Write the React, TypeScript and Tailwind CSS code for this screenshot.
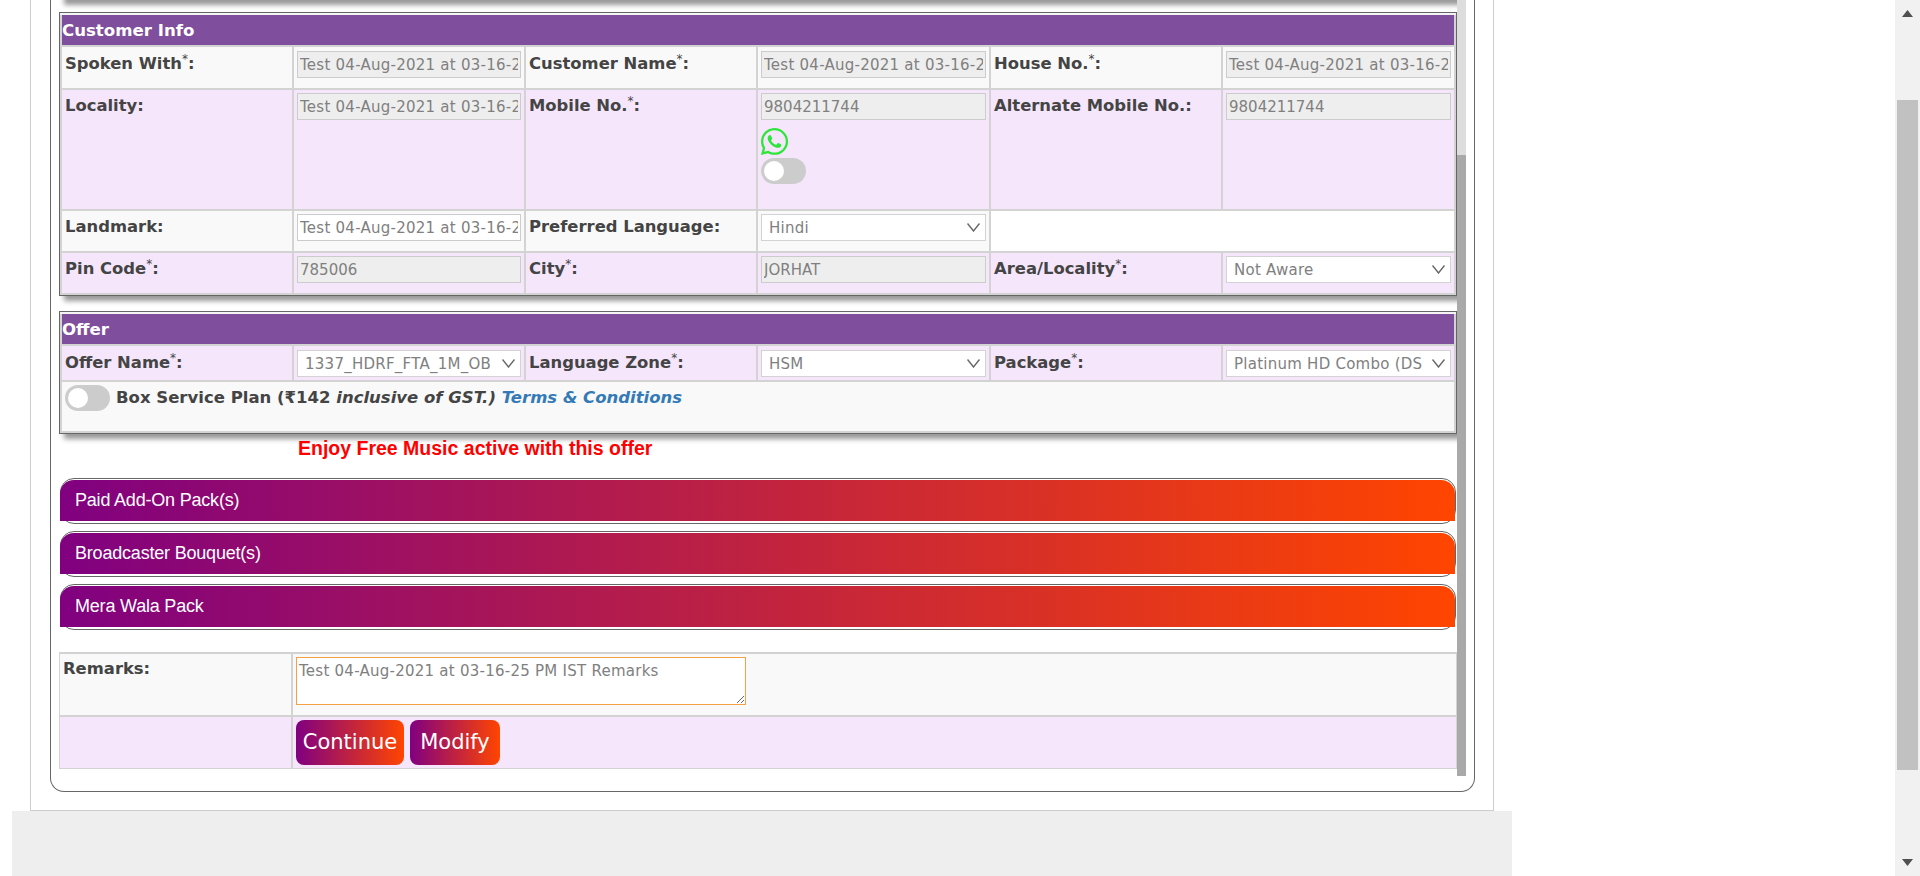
import { FaWhatsapp } from "react-icons/fa"

const testValue = "Test 04-Aug-2021 at 03-16-25 PM IST"

function Label({ text, required }: { text: string; required?: boolean }) {
  return (
    <label className="block text-[16.4px] leading-[20px] font-bold text-[#444444]">
      {text}
      {required && <sup className="text-[12px] font-normal">*</sup>}
      {required && ":"}
    </label>
  )
}

function LabelCell({ text, required, bg, pad = "pt-[6px]" }: { text: string; required?: boolean; bg: string; pad?: string }) {
  return (
    <div className={`${bg} ${pad} pl-[3px]`}>
      <Label text={text} required={required} />
    </div>
  )
}

function TextField({ value, disabled = true }: { value: string; disabled?: boolean }) {
  return (
    <input
      readOnly
      value={value}
      className={`block w-full h-[27px] border border-[#cccccc] px-[2px] text-[15px] text-[#808080] outline-none ${
        disabled ? "bg-[#eeeeee]" : "bg-white"
      } ${value === testValue ? "tracking-[0.25px]" : ""}`}
    />
  )
}

function SelectField({ value }: { value: string }) {
  return (
    <div className="relative">
      <select
        value={value}
        onChange={() => {}}
        className="block w-full h-[27px] appearance-none border border-[#d3d3d3] bg-white pl-[7px] pr-[28px] pt-px text-[15px] tracking-[0.25px] text-[#808080] outline-none"
      >
        <option>{value}</option>
      </select>
      <svg width="13" height="9" viewBox="0 0 13 9" className="absolute right-[6px] top-[9px]">
        <polyline points="0.5,0.5 6.5,8 12.5,0.5" fill="none" stroke="#666666" strokeWidth="1.4" />
      </svg>
    </div>
  )
}

function Toggle() {
  return (
    <div className="w-[45px] h-[26px] rounded-full bg-[#cccccc] p-[3px] shrink-0">
      <div className="w-[20px] h-[20px] rounded-full bg-white" />
    </div>
  )
}

function FieldCell({ bg, pad = "pt-[3px]", children }: { bg: string; pad?: string; children: React.ReactNode }) {
  return <div className={`${bg} ${pad} px-[3px]`}>{children}</div>
}

function SectionTitle({ title }: { title: string }) {
  return (
    <div className="col-span-6 h-[30px] bg-[#7f4e9c] pt-px text-[16.6px] leading-[30px] font-bold text-white">
      {title}
    </div>
  )
}

function AccordionBar({ title }: { title: string }) {
  return (
    <div className="ml-px h-[46px] w-[1396px] rounded-[14px] border border-[#666666]">
      <div
        className="-ml-px mt-px h-[41px] w-[1395px] rounded-t-[14px] bg-[linear-gradient(to_right,#800080,#ff4500)] pl-[15px] text-[18px] leading-[41px] text-white -tracking-[0.2px]"
        style={{ fontFamily: '"Liberation Sans", Arial, sans-serif' }}
      >
        {title}
      </div>
    </div>
  )
}

export default function App() {
  const white = "bg-[#f9f9f9]"
  const lilac = "bg-[#f5e6fb]"
  const sectionClass =
    "grid grid-cols-[230px_230px_230px_231px_230px_231px] gap-[2px] border border-[#666666] bg-[#d3d3d3] p-[2px] shadow-[5px_5px_5px_#999999,inset_0_2px_0_#f4f4f4]"

  return (
    <div
      className="flex h-[876px] overflow-hidden bg-white"
      style={{ fontFamily: '"DejaVu Sans", Verdana, sans-serif' }}
    >
      <div className="flex w-[1895px] flex-col pl-[12px]">
        <div className="ml-[18px] w-[1464px] h-[811px] shrink-0 border-x border-b border-[#cccccc] pl-[19px]">
          <div className="w-[1425px] h-[792px] rounded-b-[14px] border-x border-b border-[#666666]">
            <div className="flex h-[776px]">
              <div className="w-[1406px] pl-[8px] overflow-hidden">
                <div className="-mt-[10px] h-[10px] w-[1398px] shadow-[5px_5px_5px_#999999]" />
                <div className="h-[12px]" />

                <section className={sectionClass}>
                  <SectionTitle title="Customer Info" />

                  <div className={`${white} h-[41px] pl-[3px] pt-[7px]`}>
                    <Label text="Spoken With" required />
                  </div>
                  <FieldCell bg={white} pad="pt-[4px]"><TextField value={testValue} /></FieldCell>
                  <LabelCell bg={white} pad="pt-[7px]" text="Customer Name" required />
                  <FieldCell bg={white} pad="pt-[4px]"><TextField value={testValue} /></FieldCell>
                  <LabelCell bg={white} pad="pt-[7px]" text="House No." required />
                  <FieldCell bg={white} pad="pt-[4px]"><TextField value={testValue} /></FieldCell>

                  <LabelCell bg={lilac} text="Locality:" />
                  <FieldCell bg={lilac}><TextField value={testValue} /></FieldCell>
                  <LabelCell bg={lilac} text="Mobile No." required />
                  <div className={`${lilac} h-[119px] px-[3px] pt-[3px]`}>
                    <TextField value="9804211744" />
                    <FaWhatsapp className="-ml-[2px] mt-[6px] text-[#2ee63a]" size={31} />
                    <div className="mt-px"><Toggle /></div>
                  </div>
                  <LabelCell bg={lilac} text="Alternate Mobile No.:" />
                  <FieldCell bg={lilac}><TextField value="9804211744" /></FieldCell>

                  <LabelCell bg={white} text="Landmark:" />
                  <FieldCell bg={white}><TextField value={testValue} disabled={false} /></FieldCell>
                  <LabelCell bg={white} text="Preferred Language:" />
                  <FieldCell bg={white}><SelectField value="Hindi" /></FieldCell>
                  <div className="col-span-2 bg-white h-[40px]" />

                  <LabelCell bg={lilac} text="Pin Code" required />
                  <FieldCell bg={lilac}><TextField value="785006" /></FieldCell>
                  <LabelCell bg={lilac} text="City" required />
                  <FieldCell bg={lilac}><TextField value="JORHAT" /></FieldCell>
                  <LabelCell bg={lilac} text="Area/Locality" required />
                  <div className={`${lilac} h-[40px] px-[3px] pt-[3px]`}><SelectField value="Not Aware" /></div>
                </section>

                <div className="h-[15px]" />

                <section className={sectionClass}>
                  <SectionTitle title="Offer" />

                  <LabelCell bg={lilac} pad="pt-[7px]" text="Offer Name" required />
                  <FieldCell bg={lilac} pad="pt-[4px]"><SelectField value="1337_HDRF_FTA_1M_OB" /></FieldCell>
                  <LabelCell bg={lilac} pad="pt-[7px]" text="Language Zone" required />
                  <FieldCell bg={lilac} pad="pt-[4px]"><SelectField value="HSM" /></FieldCell>
                  <LabelCell bg={lilac} pad="pt-[7px]" text="Package" required />
                  <div className={`${lilac} h-[34px] px-[3px] pt-[4px]`}><SelectField value="Platinum HD Combo (DS)" /></div>

                  <div className={`${white} col-span-6 flex h-[49px] gap-[6px] pl-[3px] pt-[3px]`}>
                    <Toggle />
                    <p className="mt-[2px] text-[16.5px] leading-[22px] font-bold text-[#444444]">
                      Box Service Plan (₹142 <i>inclusive of GST.)</i>{" "}
                      <a href="#" className="italic text-[#337ab7]">Terms &amp; Conditions</a>
                    </p>
                  </div>
                </section>

                <p
                  className="ml-[239px] mt-[3px] h-[22px] text-[19.5px] leading-[22px] font-bold text-[#ff0000]"
                  style={{ fontFamily: '"Liberation Sans", Arial, sans-serif' }}
                >
                  Enjoy Free Music active with this offer
                </p>

                <div className="mt-[19px] flex flex-col gap-[7px]">
                  <AccordionBar title="Paid Add-On Pack(s)" />
                  <AccordionBar title="Broadcaster Bouquet(s)" />
                  <AccordionBar title="Mera Wala Pack" />
                </div>

                <div className="mt-[22px] grid grid-cols-[231px_1163px] gap-[2px] bg-[#d3d3d3] px-px pb-px pt-[2px]">
                  <div className={`${white} h-[61px] pl-[3px] pt-[5px]`}>
                    <Label text="Remarks:" />
                  </div>
                  <div className={`${white} pl-[3px] pt-[3px]`}>
                    <textarea
                      readOnly
                      value="Test 04-Aug-2021 at 03-16-25 PM IST Remarks"
                      className="block w-[450px] h-[48px] border border-[#f5a044] bg-white px-[2px] pt-[2px] text-[15px] tracking-[0.25px] text-[#808080] outline-none"
                    />
                  </div>
                  <div className={`${lilac} h-[51px]`} />
                  <div className={`${lilac} flex gap-[6px] pl-[3px] pt-[3px]`}>
                    <button className="h-[45px] w-[108px] rounded-[8px] bg-[linear-gradient(to_right,#800080,#ff4500)] text-[21px] text-white">
                      Continue
                    </button>
                    <button className="h-[45px] w-[90px] rounded-[8px] bg-[linear-gradient(to_right,#800080,#ff4500)] text-[21px] text-white">
                      Modify
                    </button>
                  </div>
                </div>
              </div>

              <div className="flex w-[9px] flex-col">
                <div className="h-[155px] bg-[#dddddd]" />
                <div className="flex-1 bg-[#a9a9a9]" />
              </div>
            </div>
          </div>
        </div>
        <div className="w-[1500px] flex-1 bg-[#eeeeee]" />
      </div>

      <div className="flex w-[25px] flex-col items-center bg-[#f1f1f1]">
        <svg width="11" height="7" viewBox="0 0 11 7" className="mt-[10px] shrink-0">
          <polygon points="5.5,0 11,7 0,7" fill="#505050" />
        </svg>
        <div className="mt-[83px] h-[670px] w-[21px] bg-[#c1c1c1]" />
        <svg width="11" height="7" viewBox="0 0 11 7" className="mt-[89px] shrink-0">
          <polygon points="0,0 11,0 5.5,7" fill="#505050" />
        </svg>
      </div>
    </div>
  )
}
